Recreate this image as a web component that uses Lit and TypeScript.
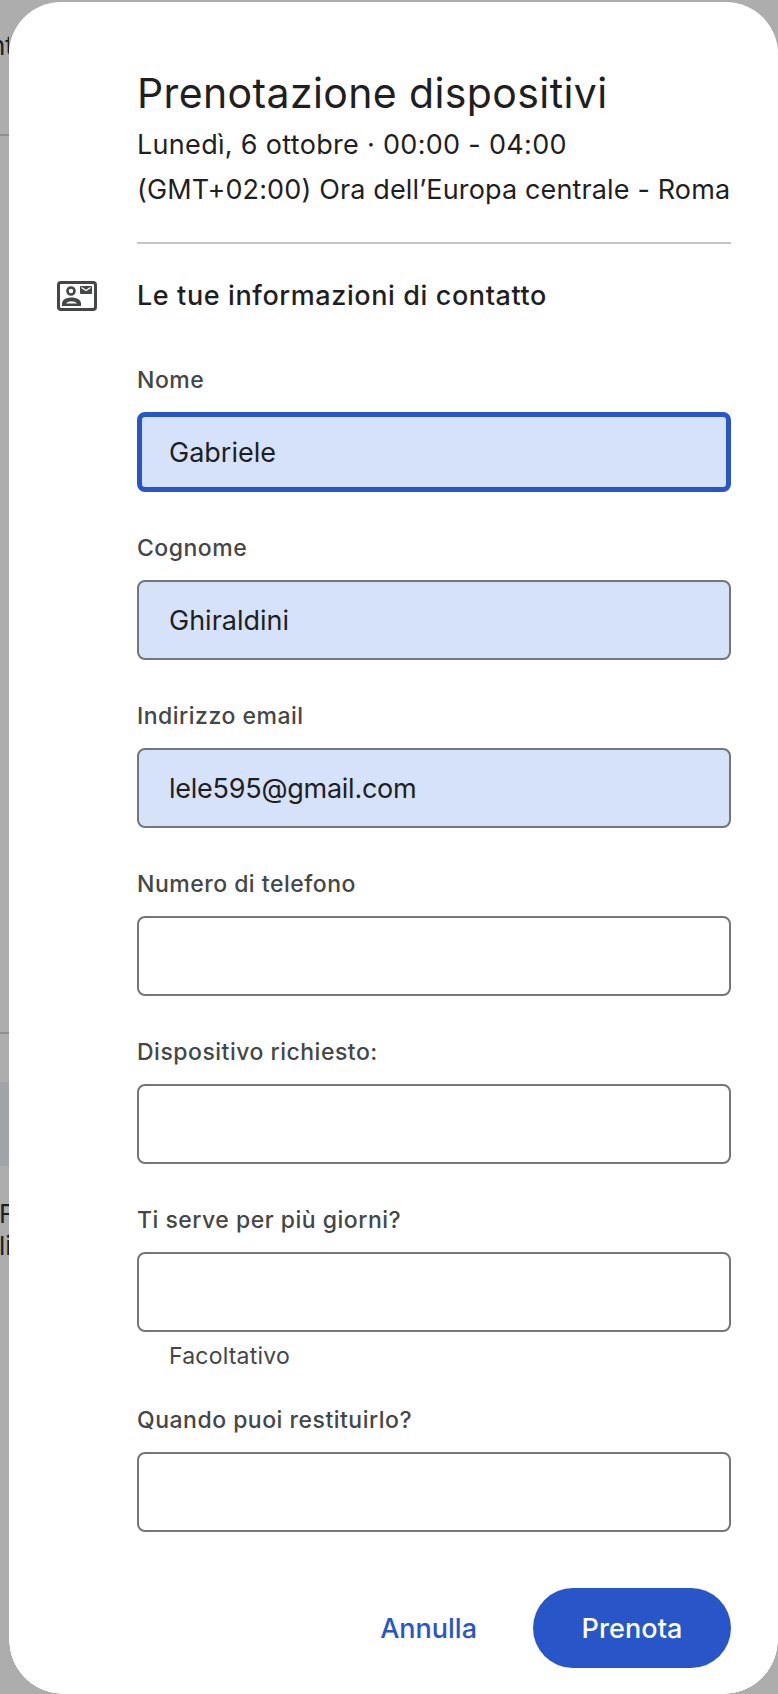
import { LitElement, html, css } from "lit";
import { customElement } from "lit/decorators.js";

interface Field { label: string; value?: string; focus?: boolean; helper?: string; tight?: boolean; }

const FIELDS: Field[] = [
  { label: "Nome", value: "Gabriele", focus: true },
  { label: "Cognome", value: "Ghiraldini" },
  { label: "Indirizzo email", value: "lele595@gmail.com", tight: true },
  { label: "Numero di telefono" },
  { label: "Dispositivo richiesto:" },
  { label: "Ti serve per più giorni?", helper: "Facoltativo" },
  { label: "Quando puoi restituirlo?" },
];

@customElement("app-root")
export class AppRoot extends LitElement {
  static styles = css`
    :host {
      display: block;
      position: relative;
      width: 778px;
      height: 1694px;
      overflow: hidden;
      background: #adadad;
      font-family: "Inter", "Roboto", sans-serif;
      color: #1f1f1f;
    }
    .bg { position: absolute; left: 0; width: 9px; overflow: hidden; }
    .bg-line { height: 2px; background: #8f8f8f; }
    .bg-l1 { top: 134px; }
    .bg-l2 { top: 1032px; }
    .bg-block { top: 1082px; height: 84px; background: #a2a3a9; }
    .bg-clip { height: 32px; }
    .bg-text { position: absolute; top: 0; font-size: 26px; line-height: 32px; color: #1f1f1f; white-space: nowrap; }
    .bg-c1 { top: 30px; }
    .bg-c2 { top: 1198px; }
    .bg-c3 { top: 1230px; }
    .bg-t1 { left: -10px; }
    .bg-t2, .bg-t3 { left: -1px; }
    .card {
      position: relative;
      box-sizing: border-box;
      margin-left: 9px;
      width: 769px;
      height: 1694px;
      margin-top: 2px;
      background: #fff;
      border-radius: 52px 52px 0 0;
      padding: 65px 47px 0 48px;
    }
    .head { padding-left: 80px; }
    h1 { margin: 0; font-size: 41px; line-height: 52px; font-weight: 400; letter-spacing: 0.38px; }
    .sub { margin-top: 3px; font-size: 27px; line-height: 45px; letter-spacing: 0.14px; }
    .sub-date { letter-spacing: 0.31px; }
    .rule { margin-top: 30px; height: 2px; background: #c6c6c6; }
    .section { display: flex; gap: 40px; margin-top: 34px; }
    .section svg { display: block; margin-top: 3px; width: 40px; height: 30px; flex: none; }
    h2 { margin: 0; font-size: 27px; line-height: 36px; font-weight: 500; letter-spacing: 0.6px; }
    .fields { display: flex; flex-direction: column; gap: 40px; margin-top: 50px; padding-left: 80px; }
    label { display: block; font-size: 23px; line-height: 32px; font-weight: 500; color: #444746; letter-spacing: 0.5px; margin-bottom: 16px; }
    input {
      display: block;
      box-sizing: border-box;
      width: 594px;
      height: 80px;
      padding: 0 30px;
      border: 2px solid #747775;
      border-radius: 8px;
      background: #fff;
      font: inherit;
      font-size: 27px;
      color: #1f1f1f;
      outline: none;
    }
    input.filled { background: #d5e2fa; }
    input.tight { letter-spacing: -0.25px; }
    input.focus { border: 5px solid #2856c9; padding: 0 27px; }
    .helper { padding: 16px 0 0 32px; font-size: 23px; line-height: 16px; color: #444746; letter-spacing: 0.2px; }
    .actions { display: flex; justify-content: flex-end; align-items: center; gap: 56px; margin-top: 56px; }
    .cancel { font-size: 27px; font-weight: 500; color: #2856c9; }
    .ok {
      width: 198px; height: 80px; border-radius: 40px; border: none;
      background: #2856c9; color: #fff; font: inherit; font-size: 27px; font-weight: 500; letter-spacing: 0.1px;
    }
    .corners { position: absolute; left: 0; top: 0; width: 778px; height: 1694px; pointer-events: none; }
    .corner { position: absolute; bottom: 0; width: 54px; height: 54px; }
    .corner.l { left: 9px; background: radial-gradient(circle at 100% 0, transparent 53.5px, #adadad 54px); }
    .corner.r { right: 0; background: radial-gradient(circle at 0 0, transparent 53.5px, #adadad 54px); }
  `;

  private field(f: Field) {
    const cls = [f.value ? "filled" : "", f.focus ? "focus" : "", f.tight ? "tight" : ""].join(" ");
    return html`
      <div>
        <label>${f.label}</label>
        <input class=${cls} .value=${f.value ?? ""} />
        ${f.helper ? html`<div class="helper">${f.helper}</div>` : ""}
      </div>
    `;
  }

  render() {
    return html`
      <div class="bg bg-line bg-l1"></div>
      <div class="bg bg-line bg-l2"></div>
      <div class="bg bg-block"></div>
      <div class="bg bg-clip bg-c1"><span class="bg-text bg-t1">nt</span></div>
      <div class="bg bg-clip bg-c2"><span class="bg-text bg-t2">F</span></div>
      <div class="bg bg-clip bg-c3"><span class="bg-text bg-t3">li</span></div>
      <div class="card">
        <div class="head">
          <h1>Prenotazione dispositivi</h1>
          <div class="sub"><div class="sub-date">Lunedì, 6 ottobre · 00:00 - 04:00</div><div>(GMT+02:00) Ora dell’Europa centrale - Roma</div></div>
          <div class="rule"></div>
        </div>
        <div class="section">
          <svg viewBox="0 0 40 30" fill="none">
            <rect x="1.5" y="1.5" width="37" height="27" rx="2.5" stroke="#444746" stroke-width="3" />
            <circle cx="14" cy="10" r="3.5" stroke="#444746" stroke-width="2.6" />
            <path d="M5 25v-2.5C5 18.5 10 16.5 14.500 16.500S24 18.500 24 22.500V25Z" fill="#444746" />
            <path d="M9 22.500C10 21 12.500 20.200 14.500 20.200S19 21 20 22.500Z" fill="#fff" />
            <rect x="23" y="5" width="12" height="8" rx="1" fill="#444746" />
            <path d="M24.500 6.500 29 9.500 33.500 6.500" stroke="#fff" stroke-width="1.400" />
          </svg>
          <h2>Le tue informazioni di contatto</h2>
        </div>
        <div class="fields">${FIELDS.map((f) => this.field(f))}</div>
        <div class="actions">
          <span class="cancel">Annulla</span>
          <button class="ok">Prenota</button>
        </div>
      </div>
      <div class="corners">
        <div class="corner l"></div>
        <div class="corner r"></div>
      </div>
    `;
  }
}
